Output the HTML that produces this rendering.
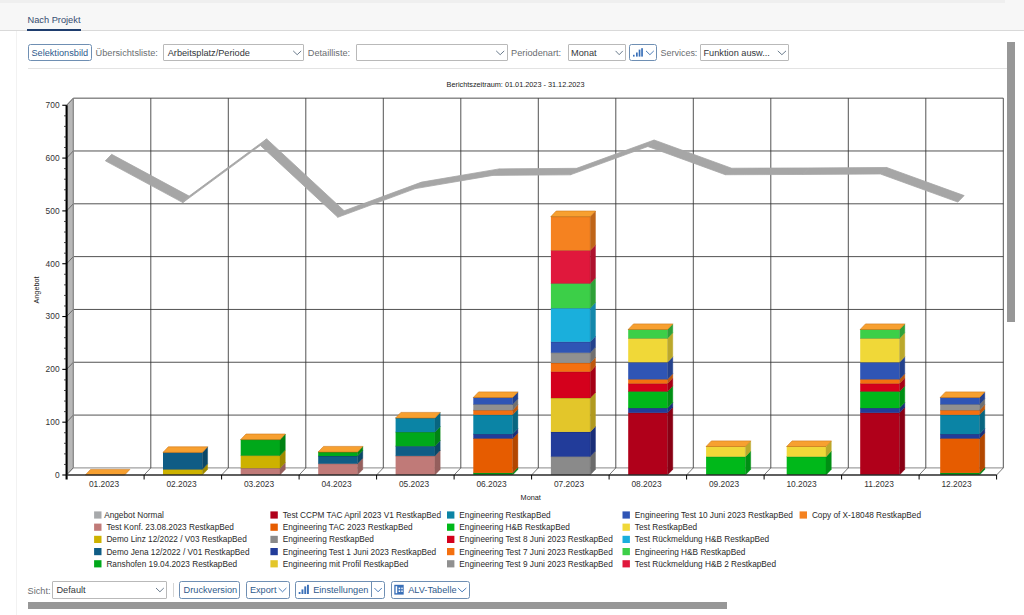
<!DOCTYPE html>
<html><head><meta charset="utf-8">
<style>
html,body{margin:0;padding:0;width:1024px;height:615px;overflow:hidden;background:#fff;font-family:"Liberation Sans",sans-serif;}
.abs{position:absolute;}
#hdr{position:absolute;left:0;top:0;width:1024px;height:30px;background:#f7f7f7;}
#hdrtop{position:absolute;left:0;top:0;width:1005px;height:3px;background:#efefef;}
#hdrline{position:absolute;left:0;top:30px;width:1024px;height:1px;background:#d9d9d9;}
#tab{position:absolute;left:27.5px;top:15px;font-size:9.25px;color:#3a5275;-webkit-text-stroke:0.05px #3a5275;white-space:nowrap;}
#tabul{position:absolute;left:27.3px;top:28.8px;width:53.5px;height:2.2px;background:#1e3d6e;}
#vline{position:absolute;left:16px;top:31px;width:1px;height:584px;background:#f2f2f2;}
.btn{position:absolute;box-sizing:border-box;border:1px solid #6f8fb3;border-radius:2.5px;background:#fff;color:#2f5a8c;font-size:9.2px;white-space:nowrap;}
.dd{position:absolute;box-sizing:border-box;border:1px solid #b9b9b9;border-radius:1px;background:#fff;color:#32363a;font-size:9.2px;white-space:nowrap;}
.lbl{position:absolute;color:#6a6d70;font-size:9.2px;white-space:nowrap;margin-top:1.2px;}
.txt{position:absolute;white-space:nowrap;}
svg.chev{position:absolute;overflow:visible;}
#sep1{position:absolute;left:27.5px;top:67.5px;width:980px;height:1.3px;background:#e3e3e3;}
#vscroll{position:absolute;left:1007.2px;top:42px;width:7.8px;height:280px;background:#979797;}
#hscroll{position:absolute;left:27.8px;top:601.8px;width:699px;height:7.4px;background:#979797;}
#chart{position:absolute;left:0;top:0;}
.ax{font-family:"Liberation Sans",sans-serif;font-size:8.4px;fill:#333;}
.tt{font-family:"Liberation Sans",sans-serif;font-size:7.3px;fill:#222;}
.lg{font-family:"Liberation Sans",sans-serif;font-size:8.25px;fill:#2a2a2a;}
</style></head><body>
<div id="hdr"><div id="hdrtop"></div></div>
<div id="hdrline"></div>
<div id="tab">Nach Projekt</div>
<div id="tabul"></div>
<div id="vline"></div>

<!-- toolbar -->
<div class="btn" style="left:27.8px;top:44.1px;width:63.8px;height:16.6px;"><span class="txt" style="left:2.6px;top:2.5px;">Selektionsbild</span></div>
<div class="lbl" style="left:95.6px;top:46.6px;">Übersichtsliste:</div>
<div class="dd" style="left:163.3px;top:44.2px;width:141px;height:16.5px;"><span class="txt" style="left:3.4px;top:2.4px;">Arbeitsplatz/Periode</span></div>
<div class="lbl" style="left:307.8px;top:46.6px;">Detailliste:</div>
<div class="dd" style="left:356.1px;top:44.2px;width:152px;height:16.5px;"></div>
<div class="lbl" style="left:511.1px;top:46.6px;">Periodenart:</div>
<div class="dd" style="left:567.5px;top:44.1px;width:58.8px;height:16.6px;"><span class="txt" style="left:2.6px;top:2.5px;">Monat</span></div>
<div class="btn" style="left:629.3px;top:43.9px;width:28.1px;height:16.7px;"></div>
<div class="lbl" style="left:660.6px;top:46.8px;font-size:8.95px;">Services:</div>
<div class="dd" style="left:700px;top:43.9px;width:89.2px;height:16.7px;"><span class="txt" style="left:2.5px;top:3.1px;">Funktion ausw...</span></div>
<div id="sep1"></div>
<div id="vscroll"></div>

<svg id="chart" width="1024" height="615" viewBox="0 0 1024 615">
<rect x="73.3" y="98.16" width="930" height="369.74" fill="#fff"/>
<polygon points="66.6,105.26 73.3,98.16 73.3,467.9 66.6,475" fill="#b8b8b8" stroke="#9a9a9a" stroke-width="0.8"/>
<polygon points="66.6,475 996.6,475 1003.3,467.9 73.3,467.9" fill="#fff"/>
<line x1="73.3" y1="467.9" x2="1003.3" y2="467.9" stroke="#a0a0a0" stroke-width="1.2"/>
<line x1="73.3" y1="415.08" x2="1003.3" y2="415.08" stroke="#333" stroke-width="0.85"/>
<line x1="66.6" y1="422.18" x2="73.3" y2="415.08" stroke="#555" stroke-width="0.8"/>
<line x1="73.3" y1="362.26" x2="1003.3" y2="362.26" stroke="#333" stroke-width="0.85"/>
<line x1="66.6" y1="369.36" x2="73.3" y2="362.26" stroke="#555" stroke-width="0.8"/>
<line x1="73.3" y1="309.44" x2="1003.3" y2="309.44" stroke="#333" stroke-width="0.85"/>
<line x1="66.6" y1="316.54" x2="73.3" y2="309.44" stroke="#555" stroke-width="0.8"/>
<line x1="73.3" y1="256.62" x2="1003.3" y2="256.62" stroke="#333" stroke-width="0.85"/>
<line x1="66.6" y1="263.72" x2="73.3" y2="256.62" stroke="#555" stroke-width="0.8"/>
<line x1="73.3" y1="203.8" x2="1003.3" y2="203.8" stroke="#333" stroke-width="0.85"/>
<line x1="66.6" y1="210.9" x2="73.3" y2="203.8" stroke="#555" stroke-width="0.8"/>
<line x1="73.3" y1="150.98" x2="1003.3" y2="150.98" stroke="#333" stroke-width="0.85"/>
<line x1="66.6" y1="158.08" x2="73.3" y2="150.98" stroke="#555" stroke-width="0.8"/>
<line x1="73.3" y1="98.16" x2="1003.3" y2="98.16" stroke="#333" stroke-width="0.85"/>
<line x1="66.6" y1="105.26" x2="73.3" y2="98.16" stroke="#555" stroke-width="0.8"/>
<line x1="150.8" y1="98.16" x2="150.8" y2="467.9" stroke="#333" stroke-width="0.85"/>
<line x1="144.1" y1="475" x2="150.8" y2="467.9" stroke="#555" stroke-width="0.8"/>
<line x1="228.3" y1="98.16" x2="228.3" y2="467.9" stroke="#333" stroke-width="0.85"/>
<line x1="221.6" y1="475" x2="228.3" y2="467.9" stroke="#555" stroke-width="0.8"/>
<line x1="305.8" y1="98.16" x2="305.8" y2="467.9" stroke="#333" stroke-width="0.85"/>
<line x1="299.1" y1="475" x2="305.8" y2="467.9" stroke="#555" stroke-width="0.8"/>
<line x1="383.3" y1="98.16" x2="383.3" y2="467.9" stroke="#333" stroke-width="0.85"/>
<line x1="376.6" y1="475" x2="383.3" y2="467.9" stroke="#555" stroke-width="0.8"/>
<line x1="460.8" y1="98.16" x2="460.8" y2="467.9" stroke="#333" stroke-width="0.85"/>
<line x1="454.1" y1="475" x2="460.8" y2="467.9" stroke="#555" stroke-width="0.8"/>
<line x1="538.3" y1="98.16" x2="538.3" y2="467.9" stroke="#333" stroke-width="0.85"/>
<line x1="531.6" y1="475" x2="538.3" y2="467.9" stroke="#555" stroke-width="0.8"/>
<line x1="615.8" y1="98.16" x2="615.8" y2="467.9" stroke="#333" stroke-width="0.85"/>
<line x1="609.1" y1="475" x2="615.8" y2="467.9" stroke="#555" stroke-width="0.8"/>
<line x1="693.3" y1="98.16" x2="693.3" y2="467.9" stroke="#333" stroke-width="0.85"/>
<line x1="686.6" y1="475" x2="693.3" y2="467.9" stroke="#555" stroke-width="0.8"/>
<line x1="770.8" y1="98.16" x2="770.8" y2="467.9" stroke="#333" stroke-width="0.85"/>
<line x1="764.1" y1="475" x2="770.8" y2="467.9" stroke="#555" stroke-width="0.8"/>
<line x1="848.3" y1="98.16" x2="848.3" y2="467.9" stroke="#333" stroke-width="0.85"/>
<line x1="841.6" y1="475" x2="848.3" y2="467.9" stroke="#555" stroke-width="0.8"/>
<line x1="925.8" y1="98.16" x2="925.8" y2="467.9" stroke="#333" stroke-width="0.85"/>
<line x1="919.1" y1="475" x2="925.8" y2="467.9" stroke="#555" stroke-width="0.8"/>
<line x1="1003.3" y1="98.16" x2="1003.3" y2="467.9" stroke="#333" stroke-width="0.85"/>
<line x1="996.6" y1="475" x2="1003.3" y2="467.9" stroke="#555" stroke-width="0.8"/>
<line x1="66.6" y1="475" x2="73.3" y2="467.9" stroke="#444" stroke-width="0.8"/>
<line x1="73.3" y1="98.16" x2="73.3" y2="467.9" stroke="#8a8a8a" stroke-width="1.2"/>
<polygon points="85.3,475 90.6,469.4 129.9,469.4 124.6,475" fill="#f7a030" stroke="#d07818" stroke-width="0.6"/>
<rect x="163" y="469.4" width="39.3" height="5.6" fill="#cdb200"/>
<polygon points="202.3,475 207.6,469.4 207.6,463.8 202.3,469.4" fill="#9f8a00" stroke="#9f8a00" stroke-width="0.4"/>
<line x1="163" y1="469.4" x2="202.3" y2="469.4" stroke="#7b6a00" stroke-width="0.7"/>
<rect x="163" y="452.4" width="39.3" height="17" fill="#0f5c85"/>
<polygon points="202.3,469.4 207.6,463.8 207.6,446.8 202.3,452.4" fill="#0b4767" stroke="#0b4767" stroke-width="0.4"/>
<line x1="163" y1="452.4" x2="202.3" y2="452.4" stroke="#09374f" stroke-width="0.7"/>
<polygon points="163,452.4 168.3,446.8 207.6,446.8 202.3,452.4" fill="#f7a030" stroke="#d07818" stroke-width="0.6"/>
<rect x="240.7" y="468.2" width="39.3" height="6.8" fill="#c07a78"/>
<polygon points="280,475 285.3,469.4 285.3,462.6 280,468.2" fill="#955f5d" stroke="#955f5d" stroke-width="0.4"/>
<line x1="240.7" y1="468.2" x2="280" y2="468.2" stroke="#734948" stroke-width="0.7"/>
<rect x="240.7" y="455.6" width="39.3" height="12.6" fill="#cdb200"/>
<polygon points="280,468.2 285.3,462.6 285.3,450 280,455.6" fill="#9f8a00" stroke="#9f8a00" stroke-width="0.4"/>
<line x1="240.7" y1="455.6" x2="280" y2="455.6" stroke="#7b6a00" stroke-width="0.7"/>
<rect x="240.7" y="439.6" width="39.3" height="16" fill="#00a81a"/>
<polygon points="280,455.6 285.3,450 285.3,434 280,439.6" fill="#008314" stroke="#008314" stroke-width="0.4"/>
<line x1="240.7" y1="439.6" x2="280" y2="439.6" stroke="#00640f" stroke-width="0.7"/>
<polygon points="240.7,439.6 246,434 285.3,434 280,439.6" fill="#f7a030" stroke="#d07818" stroke-width="0.6"/>
<rect x="318.2" y="463.7" width="39.3" height="11.3" fill="#c07a78"/>
<polygon points="357.5,475 362.8,469.4 362.8,458.1 357.5,463.7" fill="#955f5d" stroke="#955f5d" stroke-width="0.4"/>
<line x1="318.2" y1="463.7" x2="357.5" y2="463.7" stroke="#734948" stroke-width="0.7"/>
<rect x="318.2" y="456" width="39.3" height="7.7" fill="#0f5c85"/>
<polygon points="357.5,463.7 362.8,458.1 362.8,450.4 357.5,456" fill="#0b4767" stroke="#0b4767" stroke-width="0.4"/>
<line x1="318.2" y1="456" x2="357.5" y2="456" stroke="#09374f" stroke-width="0.7"/>
<rect x="318.2" y="452" width="39.3" height="4" fill="#00a81a"/>
<polygon points="357.5,456 362.8,450.4 362.8,446.4 357.5,452" fill="#008314" stroke="#008314" stroke-width="0.4"/>
<line x1="318.2" y1="452" x2="357.5" y2="452" stroke="#00640f" stroke-width="0.7"/>
<polygon points="318.2,452 323.5,446.4 362.8,446.4 357.5,452" fill="#f7a030" stroke="#d07818" stroke-width="0.6"/>
<rect x="395.6" y="455.9" width="39.3" height="19.1" fill="#c07a78"/>
<polygon points="434.9,475 440.2,469.4 440.2,450.3 434.9,455.9" fill="#955f5d" stroke="#955f5d" stroke-width="0.4"/>
<line x1="395.6" y1="455.9" x2="434.9" y2="455.9" stroke="#734948" stroke-width="0.7"/>
<rect x="395.6" y="446.2" width="39.3" height="9.7" fill="#0f5c85"/>
<polygon points="434.9,455.9 440.2,450.3 440.2,440.6 434.9,446.2" fill="#0b4767" stroke="#0b4767" stroke-width="0.4"/>
<line x1="395.6" y1="446.2" x2="434.9" y2="446.2" stroke="#09374f" stroke-width="0.7"/>
<rect x="395.6" y="432.1" width="39.3" height="14.1" fill="#00a81a"/>
<polygon points="434.9,446.2 440.2,440.6 440.2,426.5 434.9,432.1" fill="#008314" stroke="#008314" stroke-width="0.4"/>
<line x1="395.6" y1="432.1" x2="434.9" y2="432.1" stroke="#00640f" stroke-width="0.7"/>
<rect x="395.6" y="418" width="39.3" height="14.1" fill="#0b84a5"/>
<polygon points="434.9,432.1 440.2,426.5 440.2,412.4 434.9,418" fill="#086680" stroke="#086680" stroke-width="0.4"/>
<line x1="395.6" y1="418" x2="434.9" y2="418" stroke="#064f63" stroke-width="0.7"/>
<polygon points="395.6,418 400.9,412.4 440.2,412.4 434.9,418" fill="#f7a030" stroke="#d07818" stroke-width="0.6"/>
<rect x="473.3" y="472.9" width="39.3" height="2.1" fill="#00a81a"/>
<polygon points="512.6,475 517.9,469.4 517.9,467.3 512.6,472.9" fill="#008314" stroke="#008314" stroke-width="0.4"/>
<line x1="473.3" y1="472.9" x2="512.6" y2="472.9" stroke="#00640f" stroke-width="0.7"/>
<rect x="473.3" y="438.5" width="39.3" height="34.4" fill="#e65c00"/>
<polygon points="512.6,472.9 517.9,467.3 517.9,432.9 512.6,438.5" fill="#b34700" stroke="#b34700" stroke-width="0.4"/>
<line x1="473.3" y1="438.5" x2="512.6" y2="438.5" stroke="#8a3700" stroke-width="0.7"/>
<rect x="473.3" y="434.1" width="39.3" height="4.4" fill="#223c9a"/>
<polygon points="512.6,438.5 517.9,432.9 517.9,428.5 512.6,434.1" fill="#1a2e78" stroke="#1a2e78" stroke-width="0.4"/>
<line x1="473.3" y1="434.1" x2="512.6" y2="434.1" stroke="#14245c" stroke-width="0.7"/>
<rect x="473.3" y="414.8" width="39.3" height="19.3" fill="#0b84a5"/>
<polygon points="512.6,434.1 517.9,428.5 517.9,409.2 512.6,414.8" fill="#086680" stroke="#086680" stroke-width="0.4"/>
<line x1="473.3" y1="414.8" x2="512.6" y2="414.8" stroke="#064f63" stroke-width="0.7"/>
<rect x="473.3" y="410.2" width="39.3" height="4.6" fill="#f47010"/>
<polygon points="512.6,414.8 517.9,409.2 517.9,404.6 512.6,410.2" fill="#be570c" stroke="#be570c" stroke-width="0.4"/>
<line x1="473.3" y1="410.2" x2="512.6" y2="410.2" stroke="#924309" stroke-width="0.7"/>
<rect x="473.3" y="404.4" width="39.3" height="5.8" fill="#909090"/>
<polygon points="512.6,410.2 517.9,404.6 517.9,398.8 512.6,404.4" fill="#707070" stroke="#707070" stroke-width="0.4"/>
<line x1="473.3" y1="404.4" x2="512.6" y2="404.4" stroke="#565656" stroke-width="0.7"/>
<rect x="473.3" y="397.5" width="39.3" height="6.9" fill="#2f55b5"/>
<polygon points="512.6,404.4 517.9,398.8 517.9,391.9 512.6,397.5" fill="#24428d" stroke="#24428d" stroke-width="0.4"/>
<line x1="473.3" y1="397.5" x2="512.6" y2="397.5" stroke="#1c336c" stroke-width="0.7"/>
<polygon points="473.3,397.5 478.6,391.9 517.9,391.9 512.6,397.5" fill="#f7a030" stroke="#d07818" stroke-width="0.6"/>
<rect x="550.9" y="456.6" width="39.3" height="18.4" fill="#8a8a8a"/>
<polygon points="590.2,475 595.5,469.4 595.5,451 590.2,456.6" fill="#6b6b6b" stroke="#6b6b6b" stroke-width="0.4"/>
<line x1="550.9" y1="456.6" x2="590.2" y2="456.6" stroke="#525252" stroke-width="0.7"/>
<rect x="550.9" y="431.9" width="39.3" height="24.7" fill="#223c9a"/>
<polygon points="590.2,456.6 595.5,451 595.5,426.3 590.2,431.9" fill="#1a2e78" stroke="#1a2e78" stroke-width="0.4"/>
<line x1="550.9" y1="431.9" x2="590.2" y2="431.9" stroke="#14245c" stroke-width="0.7"/>
<rect x="550.9" y="398" width="39.3" height="33.9" fill="#e3c62a"/>
<polygon points="590.2,431.9 595.5,426.3 595.5,392.4 590.2,398" fill="#b19a20" stroke="#b19a20" stroke-width="0.4"/>
<line x1="550.9" y1="398" x2="590.2" y2="398" stroke="#887619" stroke-width="0.7"/>
<rect x="550.9" y="371.7" width="39.3" height="26.3" fill="#d4001c"/>
<polygon points="590.2,398 595.5,392.4 595.5,366.1 590.2,371.7" fill="#a50015" stroke="#a50015" stroke-width="0.4"/>
<line x1="550.9" y1="371.7" x2="590.2" y2="371.7" stroke="#7f0010" stroke-width="0.7"/>
<rect x="550.9" y="362.9" width="39.3" height="8.8" fill="#f47010"/>
<polygon points="590.2,371.7 595.5,366.1 595.5,357.3 590.2,362.9" fill="#be570c" stroke="#be570c" stroke-width="0.4"/>
<line x1="550.9" y1="362.9" x2="590.2" y2="362.9" stroke="#924309" stroke-width="0.7"/>
<rect x="550.9" y="352.7" width="39.3" height="10.2" fill="#909090"/>
<polygon points="590.2,362.9 595.5,357.3 595.5,347.1 590.2,352.7" fill="#707070" stroke="#707070" stroke-width="0.4"/>
<line x1="550.9" y1="352.7" x2="590.2" y2="352.7" stroke="#565656" stroke-width="0.7"/>
<rect x="550.9" y="341.8" width="39.3" height="10.9" fill="#2f55b5"/>
<polygon points="590.2,352.7 595.5,347.1 595.5,336.2 590.2,341.8" fill="#24428d" stroke="#24428d" stroke-width="0.4"/>
<line x1="550.9" y1="341.8" x2="590.2" y2="341.8" stroke="#1c336c" stroke-width="0.7"/>
<rect x="550.9" y="308.2" width="39.3" height="33.6" fill="#1aafdc"/>
<polygon points="590.2,341.8 595.5,336.2 595.5,302.6 590.2,308.2" fill="#1488ab" stroke="#1488ab" stroke-width="0.4"/>
<line x1="550.9" y1="308.2" x2="590.2" y2="308.2" stroke="#0f6984" stroke-width="0.7"/>
<rect x="550.9" y="283.5" width="39.3" height="24.7" fill="#3ccf48"/>
<polygon points="590.2,308.2 595.5,302.6 595.5,277.9 590.2,283.5" fill="#2ea138" stroke="#2ea138" stroke-width="0.4"/>
<line x1="550.9" y1="283.5" x2="590.2" y2="283.5" stroke="#247c2b" stroke-width="0.7"/>
<rect x="550.9" y="250.5" width="39.3" height="33" fill="#e0183c"/>
<polygon points="590.2,283.5 595.5,277.9 595.5,244.9 590.2,250.5" fill="#ae122e" stroke="#ae122e" stroke-width="0.4"/>
<line x1="550.9" y1="250.5" x2="590.2" y2="250.5" stroke="#860e24" stroke-width="0.7"/>
<rect x="550.9" y="216.6" width="39.3" height="33.9" fill="#f58220"/>
<polygon points="590.2,250.5 595.5,244.9 595.5,211 590.2,216.6" fill="#bf6518" stroke="#bf6518" stroke-width="0.4"/>
<line x1="550.9" y1="216.6" x2="590.2" y2="216.6" stroke="#934e13" stroke-width="0.7"/>
<polygon points="550.9,216.6 556.2,211 595.5,211 590.2,216.6" fill="#f7a030" stroke="#d07818" stroke-width="0.6"/>
<rect x="628.2" y="412.8" width="39.3" height="62.2" fill="#b0001a"/>
<polygon points="667.5,475 672.8,469.4 672.8,407.2 667.5,412.8" fill="#890014" stroke="#890014" stroke-width="0.4"/>
<line x1="628.2" y1="412.8" x2="667.5" y2="412.8" stroke="#69000f" stroke-width="0.7"/>
<rect x="628.2" y="408.1" width="39.3" height="4.7" fill="#223c9a"/>
<polygon points="667.5,412.8 672.8,407.2 672.8,402.5 667.5,408.1" fill="#1a2e78" stroke="#1a2e78" stroke-width="0.4"/>
<line x1="628.2" y1="408.1" x2="667.5" y2="408.1" stroke="#14245c" stroke-width="0.7"/>
<rect x="628.2" y="391.5" width="39.3" height="16.6" fill="#00b81a"/>
<polygon points="667.5,408.1 672.8,402.5 672.8,385.9 667.5,391.5" fill="#008f14" stroke="#008f14" stroke-width="0.4"/>
<line x1="628.2" y1="391.5" x2="667.5" y2="391.5" stroke="#006e0f" stroke-width="0.7"/>
<rect x="628.2" y="383.6" width="39.3" height="7.9" fill="#d4001c"/>
<polygon points="667.5,391.5 672.8,385.9 672.8,378 667.5,383.6" fill="#a50015" stroke="#a50015" stroke-width="0.4"/>
<line x1="628.2" y1="383.6" x2="667.5" y2="383.6" stroke="#7f0010" stroke-width="0.7"/>
<rect x="628.2" y="379.3" width="39.3" height="4.3" fill="#f47010"/>
<polygon points="667.5,383.6 672.8,378 672.8,373.7 667.5,379.3" fill="#be570c" stroke="#be570c" stroke-width="0.4"/>
<line x1="628.2" y1="379.3" x2="667.5" y2="379.3" stroke="#924309" stroke-width="0.7"/>
<rect x="628.2" y="362.3" width="39.3" height="17" fill="#2f55b5"/>
<polygon points="667.5,379.3 672.8,373.7 672.8,356.7 667.5,362.3" fill="#24428d" stroke="#24428d" stroke-width="0.4"/>
<line x1="628.2" y1="362.3" x2="667.5" y2="362.3" stroke="#1c336c" stroke-width="0.7"/>
<rect x="628.2" y="338.4" width="39.3" height="23.9" fill="#f0d838"/>
<polygon points="667.5,362.3 672.8,356.7 672.8,332.8 667.5,338.4" fill="#bba82b" stroke="#bba82b" stroke-width="0.4"/>
<line x1="628.2" y1="338.4" x2="667.5" y2="338.4" stroke="#908121" stroke-width="0.7"/>
<rect x="628.2" y="329.5" width="39.3" height="8.9" fill="#3ccf48"/>
<polygon points="667.5,338.4 672.8,332.8 672.8,323.9 667.5,329.5" fill="#2ea138" stroke="#2ea138" stroke-width="0.4"/>
<line x1="628.2" y1="329.5" x2="667.5" y2="329.5" stroke="#247c2b" stroke-width="0.7"/>
<polygon points="628.2,329.5 633.5,323.9 672.8,323.9 667.5,329.5" fill="#f7a030" stroke="#d07818" stroke-width="0.6"/>
<rect x="706.1" y="456.7" width="39.3" height="18.3" fill="#00b81a"/>
<polygon points="745.4,475 750.7,469.4 750.7,451.1 745.4,456.7" fill="#008f14" stroke="#008f14" stroke-width="0.4"/>
<line x1="706.1" y1="456.7" x2="745.4" y2="456.7" stroke="#006e0f" stroke-width="0.7"/>
<rect x="706.1" y="446.5" width="39.3" height="10.2" fill="#f0d838"/>
<polygon points="745.4,456.7 750.7,451.1 750.7,440.9 745.4,446.5" fill="#bba82b" stroke="#bba82b" stroke-width="0.4"/>
<line x1="706.1" y1="446.5" x2="745.4" y2="446.5" stroke="#908121" stroke-width="0.7"/>
<polygon points="706.1,446.5 711.4,440.9 750.7,440.9 745.4,446.5" fill="#f7a030" stroke="#d07818" stroke-width="0.6"/>
<rect x="786.7" y="456.7" width="39.3" height="18.3" fill="#00b81a"/>
<polygon points="826,475 831.3,469.4 831.3,451.1 826,456.7" fill="#008f14" stroke="#008f14" stroke-width="0.4"/>
<line x1="786.7" y1="456.7" x2="826" y2="456.7" stroke="#006e0f" stroke-width="0.7"/>
<rect x="786.7" y="446.5" width="39.3" height="10.2" fill="#f0d838"/>
<polygon points="826,456.7 831.3,451.1 831.3,440.9 826,446.5" fill="#bba82b" stroke="#bba82b" stroke-width="0.4"/>
<line x1="786.7" y1="446.5" x2="826" y2="446.5" stroke="#908121" stroke-width="0.7"/>
<polygon points="786.7,446.5 792,440.9 831.3,440.9 826,446.5" fill="#f7a030" stroke="#d07818" stroke-width="0.6"/>
<rect x="860.2" y="412.8" width="39.3" height="62.2" fill="#b0001a"/>
<polygon points="899.5,475 904.8,469.4 904.8,407.2 899.5,412.8" fill="#890014" stroke="#890014" stroke-width="0.4"/>
<line x1="860.2" y1="412.8" x2="899.5" y2="412.8" stroke="#69000f" stroke-width="0.7"/>
<rect x="860.2" y="408.1" width="39.3" height="4.7" fill="#223c9a"/>
<polygon points="899.5,412.8 904.8,407.2 904.8,402.5 899.5,408.1" fill="#1a2e78" stroke="#1a2e78" stroke-width="0.4"/>
<line x1="860.2" y1="408.1" x2="899.5" y2="408.1" stroke="#14245c" stroke-width="0.7"/>
<rect x="860.2" y="391.5" width="39.3" height="16.6" fill="#00b81a"/>
<polygon points="899.5,408.1 904.8,402.5 904.8,385.9 899.5,391.5" fill="#008f14" stroke="#008f14" stroke-width="0.4"/>
<line x1="860.2" y1="391.5" x2="899.5" y2="391.5" stroke="#006e0f" stroke-width="0.7"/>
<rect x="860.2" y="383.6" width="39.3" height="7.9" fill="#d4001c"/>
<polygon points="899.5,391.5 904.8,385.9 904.8,378 899.5,383.6" fill="#a50015" stroke="#a50015" stroke-width="0.4"/>
<line x1="860.2" y1="383.6" x2="899.5" y2="383.6" stroke="#7f0010" stroke-width="0.7"/>
<rect x="860.2" y="379.3" width="39.3" height="4.3" fill="#f47010"/>
<polygon points="899.5,383.6 904.8,378 904.8,373.7 899.5,379.3" fill="#be570c" stroke="#be570c" stroke-width="0.4"/>
<line x1="860.2" y1="379.3" x2="899.5" y2="379.3" stroke="#924309" stroke-width="0.7"/>
<rect x="860.2" y="362.3" width="39.3" height="17" fill="#2f55b5"/>
<polygon points="899.5,379.3 904.8,373.7 904.8,356.7 899.5,362.3" fill="#24428d" stroke="#24428d" stroke-width="0.4"/>
<line x1="860.2" y1="362.3" x2="899.5" y2="362.3" stroke="#1c336c" stroke-width="0.7"/>
<rect x="860.2" y="338.4" width="39.3" height="23.9" fill="#f0d838"/>
<polygon points="899.5,362.3 904.8,356.7 904.8,332.8 899.5,338.4" fill="#bba82b" stroke="#bba82b" stroke-width="0.4"/>
<line x1="860.2" y1="338.4" x2="899.5" y2="338.4" stroke="#908121" stroke-width="0.7"/>
<rect x="860.2" y="329.5" width="39.3" height="8.9" fill="#3ccf48"/>
<polygon points="899.5,338.4 904.8,332.8 904.8,323.9 899.5,329.5" fill="#2ea138" stroke="#2ea138" stroke-width="0.4"/>
<line x1="860.2" y1="329.5" x2="899.5" y2="329.5" stroke="#247c2b" stroke-width="0.7"/>
<polygon points="860.2,329.5 865.5,323.9 904.8,323.9 899.5,329.5" fill="#f7a030" stroke="#d07818" stroke-width="0.6"/>
<rect x="940.2" y="472.9" width="39.3" height="2.1" fill="#00a81a"/>
<polygon points="979.5,475 984.8,469.4 984.8,467.3 979.5,472.9" fill="#008314" stroke="#008314" stroke-width="0.4"/>
<line x1="940.2" y1="472.9" x2="979.5" y2="472.9" stroke="#00640f" stroke-width="0.7"/>
<rect x="940.2" y="438.5" width="39.3" height="34.4" fill="#e65c00"/>
<polygon points="979.5,472.9 984.8,467.3 984.8,432.9 979.5,438.5" fill="#b34700" stroke="#b34700" stroke-width="0.4"/>
<line x1="940.2" y1="438.5" x2="979.5" y2="438.5" stroke="#8a3700" stroke-width="0.7"/>
<rect x="940.2" y="434.1" width="39.3" height="4.4" fill="#223c9a"/>
<polygon points="979.5,438.5 984.8,432.9 984.8,428.5 979.5,434.1" fill="#1a2e78" stroke="#1a2e78" stroke-width="0.4"/>
<line x1="940.2" y1="434.1" x2="979.5" y2="434.1" stroke="#14245c" stroke-width="0.7"/>
<rect x="940.2" y="414.8" width="39.3" height="19.3" fill="#0b84a5"/>
<polygon points="979.5,434.1 984.8,428.5 984.8,409.2 979.5,414.8" fill="#086680" stroke="#086680" stroke-width="0.4"/>
<line x1="940.2" y1="414.8" x2="979.5" y2="414.8" stroke="#064f63" stroke-width="0.7"/>
<rect x="940.2" y="410.2" width="39.3" height="4.6" fill="#f47010"/>
<polygon points="979.5,414.8 984.8,409.2 984.8,404.6 979.5,410.2" fill="#be570c" stroke="#be570c" stroke-width="0.4"/>
<line x1="940.2" y1="410.2" x2="979.5" y2="410.2" stroke="#924309" stroke-width="0.7"/>
<rect x="940.2" y="404.4" width="39.3" height="5.8" fill="#909090"/>
<polygon points="979.5,410.2 984.8,404.6 984.8,398.8 979.5,404.4" fill="#707070" stroke="#707070" stroke-width="0.4"/>
<line x1="940.2" y1="404.4" x2="979.5" y2="404.4" stroke="#565656" stroke-width="0.7"/>
<rect x="940.2" y="397.5" width="39.3" height="6.9" fill="#2f55b5"/>
<polygon points="979.5,404.4 984.8,398.8 984.8,391.9 979.5,397.5" fill="#24428d" stroke="#24428d" stroke-width="0.4"/>
<line x1="940.2" y1="397.5" x2="979.5" y2="397.5" stroke="#1c336c" stroke-width="0.7"/>
<polygon points="940.2,397.5 945.5,391.9 984.8,391.9 979.5,397.5" fill="#f7a030" stroke="#d07818" stroke-width="0.6"/>
<polygon points="105.35,160.83 182.85,202.61 189.15,196.11 111.65,154.33" fill="#a6a6a6" stroke="#a6a6a6" stroke-width="0.8" stroke-linejoin="round"/>
<polygon points="182.85,202.61 260.35,145.4 266.65,138.9 189.15,196.11" fill="#a6a6a6" stroke="#a6a6a6" stroke-width="0.8" stroke-linejoin="round"/>
<polygon points="260.35,145.4 337.85,217.29 344.15,210.79 266.65,138.9" fill="#a6a6a6" stroke="#a6a6a6" stroke-width="0.8" stroke-linejoin="round"/>
<polygon points="337.85,217.29 415.35,188.61 421.65,182.11 344.15,210.79" fill="#a6a6a6" stroke="#a6a6a6" stroke-width="0.8" stroke-linejoin="round"/>
<polygon points="415.35,188.61 492.85,175.4 499.15,168.9 421.65,182.11" fill="#a6a6a6" stroke="#a6a6a6" stroke-width="0.8" stroke-linejoin="round"/>
<polygon points="492.85,175.4 570.35,174.82 576.65,168.32 499.15,168.9" fill="#a6a6a6" stroke="#a6a6a6" stroke-width="0.8" stroke-linejoin="round"/>
<polygon points="570.35,174.82 647.85,146.51 654.15,140.01 576.65,168.32" fill="#a6a6a6" stroke="#a6a6a6" stroke-width="0.8" stroke-linejoin="round"/>
<polygon points="647.85,146.51 725.35,174.72 731.65,168.22 654.15,140.01" fill="#a6a6a6" stroke="#a6a6a6" stroke-width="0.8" stroke-linejoin="round"/>
<polygon points="725.35,174.72 802.85,174.45 809.15,167.95 731.65,168.22" fill="#a6a6a6" stroke="#a6a6a6" stroke-width="0.8" stroke-linejoin="round"/>
<polygon points="802.85,174.45 880.35,173.98 886.65,167.48 809.15,167.95" fill="#a6a6a6" stroke="#a6a6a6" stroke-width="0.8" stroke-linejoin="round"/>
<polygon points="880.35,173.98 957.85,202.08 964.15,195.58 886.65,167.48" fill="#a6a6a6" stroke="#a6a6a6" stroke-width="0.8" stroke-linejoin="round"/>
<line x1="66.6" y1="105.26" x2="66.6" y2="479.5" stroke="#000" stroke-width="2.1"/>
<line x1="66.6" y1="475" x2="996.6" y2="475" stroke="#2a2a2a" stroke-width="1.6"/>
<line x1="62.3" y1="475" x2="66.6" y2="475" stroke="#000" stroke-width="1.1"/>
<line x1="64.0" y1="464.44" x2="66.6" y2="464.44" stroke="#222" stroke-width="0.8"/>
<line x1="64.0" y1="453.87" x2="66.6" y2="453.87" stroke="#222" stroke-width="0.8"/>
<line x1="64.0" y1="443.31" x2="66.6" y2="443.31" stroke="#222" stroke-width="0.8"/>
<line x1="64.0" y1="432.74" x2="66.6" y2="432.74" stroke="#222" stroke-width="0.8"/>
<line x1="62.3" y1="422.18" x2="66.6" y2="422.18" stroke="#000" stroke-width="1.1"/>
<line x1="64.0" y1="411.62" x2="66.6" y2="411.62" stroke="#222" stroke-width="0.8"/>
<line x1="64.0" y1="401.05" x2="66.6" y2="401.05" stroke="#222" stroke-width="0.8"/>
<line x1="64.0" y1="390.49" x2="66.6" y2="390.49" stroke="#222" stroke-width="0.8"/>
<line x1="64.0" y1="379.92" x2="66.6" y2="379.92" stroke="#222" stroke-width="0.8"/>
<line x1="62.3" y1="369.36" x2="66.6" y2="369.36" stroke="#000" stroke-width="1.1"/>
<line x1="64.0" y1="358.8" x2="66.6" y2="358.8" stroke="#222" stroke-width="0.8"/>
<line x1="64.0" y1="348.23" x2="66.6" y2="348.23" stroke="#222" stroke-width="0.8"/>
<line x1="64.0" y1="337.67" x2="66.6" y2="337.67" stroke="#222" stroke-width="0.8"/>
<line x1="64.0" y1="327.1" x2="66.6" y2="327.1" stroke="#222" stroke-width="0.8"/>
<line x1="62.3" y1="316.54" x2="66.6" y2="316.54" stroke="#000" stroke-width="1.1"/>
<line x1="64.0" y1="305.98" x2="66.6" y2="305.98" stroke="#222" stroke-width="0.8"/>
<line x1="64.0" y1="295.41" x2="66.6" y2="295.41" stroke="#222" stroke-width="0.8"/>
<line x1="64.0" y1="284.85" x2="66.6" y2="284.85" stroke="#222" stroke-width="0.8"/>
<line x1="64.0" y1="274.28" x2="66.6" y2="274.28" stroke="#222" stroke-width="0.8"/>
<line x1="62.3" y1="263.72" x2="66.6" y2="263.72" stroke="#000" stroke-width="1.1"/>
<line x1="64.0" y1="253.16" x2="66.6" y2="253.16" stroke="#222" stroke-width="0.8"/>
<line x1="64.0" y1="242.59" x2="66.6" y2="242.59" stroke="#222" stroke-width="0.8"/>
<line x1="64.0" y1="232.03" x2="66.6" y2="232.03" stroke="#222" stroke-width="0.8"/>
<line x1="64.0" y1="221.46" x2="66.6" y2="221.46" stroke="#222" stroke-width="0.8"/>
<line x1="62.3" y1="210.9" x2="66.6" y2="210.9" stroke="#000" stroke-width="1.1"/>
<line x1="64.0" y1="200.34" x2="66.6" y2="200.34" stroke="#222" stroke-width="0.8"/>
<line x1="64.0" y1="189.77" x2="66.6" y2="189.77" stroke="#222" stroke-width="0.8"/>
<line x1="64.0" y1="179.21" x2="66.6" y2="179.21" stroke="#222" stroke-width="0.8"/>
<line x1="64.0" y1="168.64" x2="66.6" y2="168.64" stroke="#222" stroke-width="0.8"/>
<line x1="62.3" y1="158.08" x2="66.6" y2="158.08" stroke="#000" stroke-width="1.1"/>
<line x1="64.0" y1="147.52" x2="66.6" y2="147.52" stroke="#222" stroke-width="0.8"/>
<line x1="64.0" y1="136.95" x2="66.6" y2="136.95" stroke="#222" stroke-width="0.8"/>
<line x1="64.0" y1="126.39" x2="66.6" y2="126.39" stroke="#222" stroke-width="0.8"/>
<line x1="64.0" y1="115.82" x2="66.6" y2="115.82" stroke="#222" stroke-width="0.8"/>
<line x1="62.3" y1="105.26" x2="66.6" y2="105.26" stroke="#000" stroke-width="1.1"/>
<line x1="144.1" y1="475" x2="144.1" y2="479.5" stroke="#000" stroke-width="1"/>
<line x1="221.6" y1="475" x2="221.6" y2="479.5" stroke="#000" stroke-width="1"/>
<line x1="299.1" y1="475" x2="299.1" y2="479.5" stroke="#000" stroke-width="1"/>
<line x1="376.6" y1="475" x2="376.6" y2="479.5" stroke="#000" stroke-width="1"/>
<line x1="454.1" y1="475" x2="454.1" y2="479.5" stroke="#000" stroke-width="1"/>
<line x1="531.6" y1="475" x2="531.6" y2="479.5" stroke="#000" stroke-width="1"/>
<line x1="609.1" y1="475" x2="609.1" y2="479.5" stroke="#000" stroke-width="1"/>
<line x1="686.6" y1="475" x2="686.6" y2="479.5" stroke="#000" stroke-width="1"/>
<line x1="764.1" y1="475" x2="764.1" y2="479.5" stroke="#000" stroke-width="1"/>
<line x1="841.6" y1="475" x2="841.6" y2="479.5" stroke="#000" stroke-width="1"/>
<line x1="919.1" y1="475" x2="919.1" y2="479.5" stroke="#000" stroke-width="1"/>
<line x1="996.6" y1="475" x2="996.6" y2="479.5" stroke="#000" stroke-width="1"/>
<text x="59.6" y="477.9" text-anchor="end" class="ax">0</text>
<text x="59.6" y="425.08" text-anchor="end" class="ax">100</text>
<text x="59.6" y="372.26" text-anchor="end" class="ax">200</text>
<text x="59.6" y="319.44" text-anchor="end" class="ax">300</text>
<text x="59.6" y="266.62" text-anchor="end" class="ax">400</text>
<text x="59.6" y="213.8" text-anchor="end" class="ax">500</text>
<text x="59.6" y="160.98" text-anchor="end" class="ax">600</text>
<text x="59.6" y="108.16" text-anchor="end" class="ax">700</text>
<text x="104.05" y="486.6" text-anchor="middle" class="ax">01.2023</text>
<text x="181.55" y="486.6" text-anchor="middle" class="ax">02.2023</text>
<text x="259.05" y="486.6" text-anchor="middle" class="ax">03.2023</text>
<text x="336.55" y="486.6" text-anchor="middle" class="ax">04.2023</text>
<text x="414.05" y="486.6" text-anchor="middle" class="ax">05.2023</text>
<text x="491.55" y="486.6" text-anchor="middle" class="ax">06.2023</text>
<text x="569.05" y="486.6" text-anchor="middle" class="ax">07.2023</text>
<text x="646.55" y="486.6" text-anchor="middle" class="ax">08.2023</text>
<text x="724.05" y="486.6" text-anchor="middle" class="ax">09.2023</text>
<text x="801.55" y="486.6" text-anchor="middle" class="ax">10.2023</text>
<text x="879.05" y="486.6" text-anchor="middle" class="ax">11.2023</text>
<text x="956.55" y="486.6" text-anchor="middle" class="ax">12.2023</text>
<text x="530.7" y="499.6" text-anchor="middle" class="tt">Monat</text>
<text x="515.5" y="86.6" text-anchor="middle" class="tt">Berichtszeitraum: 01.01.2023 - 31.12.2023</text>
<text transform="translate(38.6,290) rotate(-90)" text-anchor="middle" class="tt">Angebot</text>
<rect x="94.1" y="511.4" width="7.4" height="7.2" fill="#a7a9ab"/>
<text x="104.2" y="518" class="lg">Angebot Normal</text>
<rect x="94.1" y="523.6" width="7.4" height="7.2" fill="#c07a78"/>
<text x="106.4" y="530.2" class="lg">Test Konf. 23.08.2023 RestkapBed</text>
<rect x="94.1" y="535.8" width="7.4" height="7.2" fill="#cdb200"/>
<text x="106.4" y="542.4" class="lg">Demo Linz 12/2022 / V03 RestkapBed</text>
<rect x="94.1" y="548" width="7.4" height="7.2" fill="#0f5c85"/>
<text x="106.4" y="554.6" class="lg">Demo Jena 12/2022 / V01 RestkapBed</text>
<rect x="94.1" y="560.2" width="7.4" height="7.2" fill="#00a81a"/>
<text x="106.4" y="566.8" class="lg">Ranshofen 19.04.2023 RestkapBed</text>
<rect x="270.4" y="511.4" width="7.4" height="7.2" fill="#b0001a"/>
<text x="282.7" y="518" class="lg">Test CCPM TAC April 2023 V1 RestkapBed</text>
<rect x="270.4" y="523.6" width="7.4" height="7.2" fill="#e65c00"/>
<text x="282.7" y="530.2" class="lg">Engineering TAC 2023 RestkapBed</text>
<rect x="270.4" y="535.8" width="7.4" height="7.2" fill="#8a8a8a"/>
<text x="282.7" y="542.4" class="lg">Engineering RestkapBed</text>
<rect x="270.4" y="548" width="7.4" height="7.2" fill="#223c9a"/>
<text x="282.7" y="554.6" class="lg">Engineering Test 1 Juni 2023 RestkapBed</text>
<rect x="270.4" y="560.2" width="7.4" height="7.2" fill="#e3c62a"/>
<text x="282.7" y="566.8" class="lg">Engineering mit Profil RestkapBed</text>
<rect x="447" y="511.4" width="7.4" height="7.2" fill="#0b84a5"/>
<text x="459.3" y="518" class="lg">Engineering RestkapBed</text>
<rect x="447" y="523.6" width="7.4" height="7.2" fill="#00b81a"/>
<text x="459.3" y="530.2" class="lg">Engineering H&amp;B RestkapBed</text>
<rect x="447" y="535.8" width="7.4" height="7.2" fill="#d4001c"/>
<text x="459.3" y="542.4" class="lg">Engineering Test 8 Juni 2023 RestkapBed</text>
<rect x="447" y="548" width="7.4" height="7.2" fill="#f47010"/>
<text x="459.3" y="554.6" class="lg">Engineering Test 7 Juni 2023 RestkapBed</text>
<rect x="447" y="560.2" width="7.4" height="7.2" fill="#909090"/>
<text x="459.3" y="566.8" class="lg">Engineering Test 9 Juni 2023 RestkapBed</text>
<rect x="622.5" y="511.4" width="7.4" height="7.2" fill="#2f55b5"/>
<text x="634.8" y="518" class="lg">Engineering Test 10 Juni 2023 RestkapBed</text>
<rect x="622.5" y="523.6" width="7.4" height="7.2" fill="#f0d838"/>
<text x="634.8" y="530.2" class="lg">Test RestkapBed</text>
<rect x="622.5" y="535.8" width="7.4" height="7.2" fill="#1aafdc"/>
<text x="634.8" y="542.4" class="lg">Test R&uuml;ckmeldung H&amp;B RestkapBed</text>
<rect x="622.5" y="548" width="7.4" height="7.2" fill="#3ccf48"/>
<text x="634.8" y="554.6" class="lg">Engineering H&amp;B RestkapBed</text>
<rect x="622.5" y="560.2" width="7.4" height="7.2" fill="#e0183c"/>
<text x="634.8" y="566.8" class="lg">Test R&uuml;ckmeldung H&amp;B 2 RestkapBed</text>
<rect x="799.6" y="511.4" width="7.4" height="7.2" fill="#f58220"/>
<text x="811.9" y="518" class="lg">Copy of X-18048 RestkapBed</text>
</svg>

<!-- bottom toolbar -->
<div class="lbl" style="left:27.6px;top:584.9px;">Sicht:</div>
<div class="dd" style="left:52.3px;top:581.3px;width:115px;height:17.3px;"><span class="txt" style="left:3.2px;top:3.2px;">Default</span></div>
<div style="position:absolute;left:173.3px;top:583px;width:1px;height:14px;background:#d5d5d5;"></div>
<div class="btn" style="left:179.4px;top:581.2px;width:60.6px;height:17.4px;"><span class="txt" style="left:3.2px;top:3px;">Druckversion</span></div>
<div class="btn" style="left:245.5px;top:581.2px;width:44.2px;height:17.4px;"><span class="txt" style="left:3.4px;top:3px;">Export</span></div>
<div class="btn" style="left:295.2px;top:581.2px;width:89.4px;height:17.4px;"><span class="txt" style="left:17px;top:3px;">Einstellungen</span><div style="position:absolute;left:74.5px;top:0;width:1px;height:15px;background:#6f8fb3;"></div></div>
<div class="btn" style="left:390.7px;top:581.2px;width:78.9px;height:17.4px;"><span class="txt" style="left:16.5px;top:3px;">ALV-Tabelle</span></div>
<div id="hscroll"></div>

<svg class="chev" style="left:0;top:0" width="1024" height="615">
<g fill="none" stroke="#5a6d80" stroke-width="0.9">
<polyline points="293.2,50.9 297.2,54.7 301.2,50.9"/>
<polyline points="496.2,50.9 500.2,54.7 504.2,50.9"/>
<polyline points="615.6,50.9 619.2,54.7 622.8,50.9"/>
<polyline points="777.8,50.9 781.9,54.7 786,50.9"/>
<polyline points="156,588 159.9,591.8 163.8,588"/>
</g>
<g fill="none" stroke="#3a6fb0" stroke-width="0.9">
<polyline points="646,50.9 649.9,54.7 653.8,50.9"/>
<polyline points="278.6,588 282.5,591.8 286.4,588"/>
<polyline points="374.4,588 378.1,591.8 381.8,588"/>
<polyline points="457.9,588 462.1,591.8 466.3,588"/>
</g>
<g fill="#3a70b8">
<rect x="633" y="54.8" width="1.6" height="1.8"/>
<rect x="636" y="52.5" width="1.7" height="4.1"/>
<rect x="638.7" y="49.6" width="1.7" height="7"/>
<rect x="641.2" y="48.2" width="1.7" height="8.4"/>
<rect x="298.7" y="592" width="1.8" height="2"/>
<rect x="301.5" y="589.4" width="1.9" height="4.6"/>
<rect x="304.3" y="586.4" width="1.9" height="7.6"/>
<rect x="307" y="584.8" width="1.9" height="9.2"/>
</g>
<rect x="394.3" y="584.8" width="9.4" height="9.8" fill="#3a70b8"/>
<g fill="#fff">
<rect x="395.6" y="586.2" width="1.6" height="7"/>
<rect x="398.6" y="587.6" width="1.6" height="1.6"/>
<rect x="398.6" y="590.4" width="1.6" height="1.6"/>
<rect x="401.3" y="587.6" width="1.4" height="1.6"/>
<rect x="401.3" y="590.4" width="1.4" height="1.6"/>
</g>
</svg>
</body></html>
